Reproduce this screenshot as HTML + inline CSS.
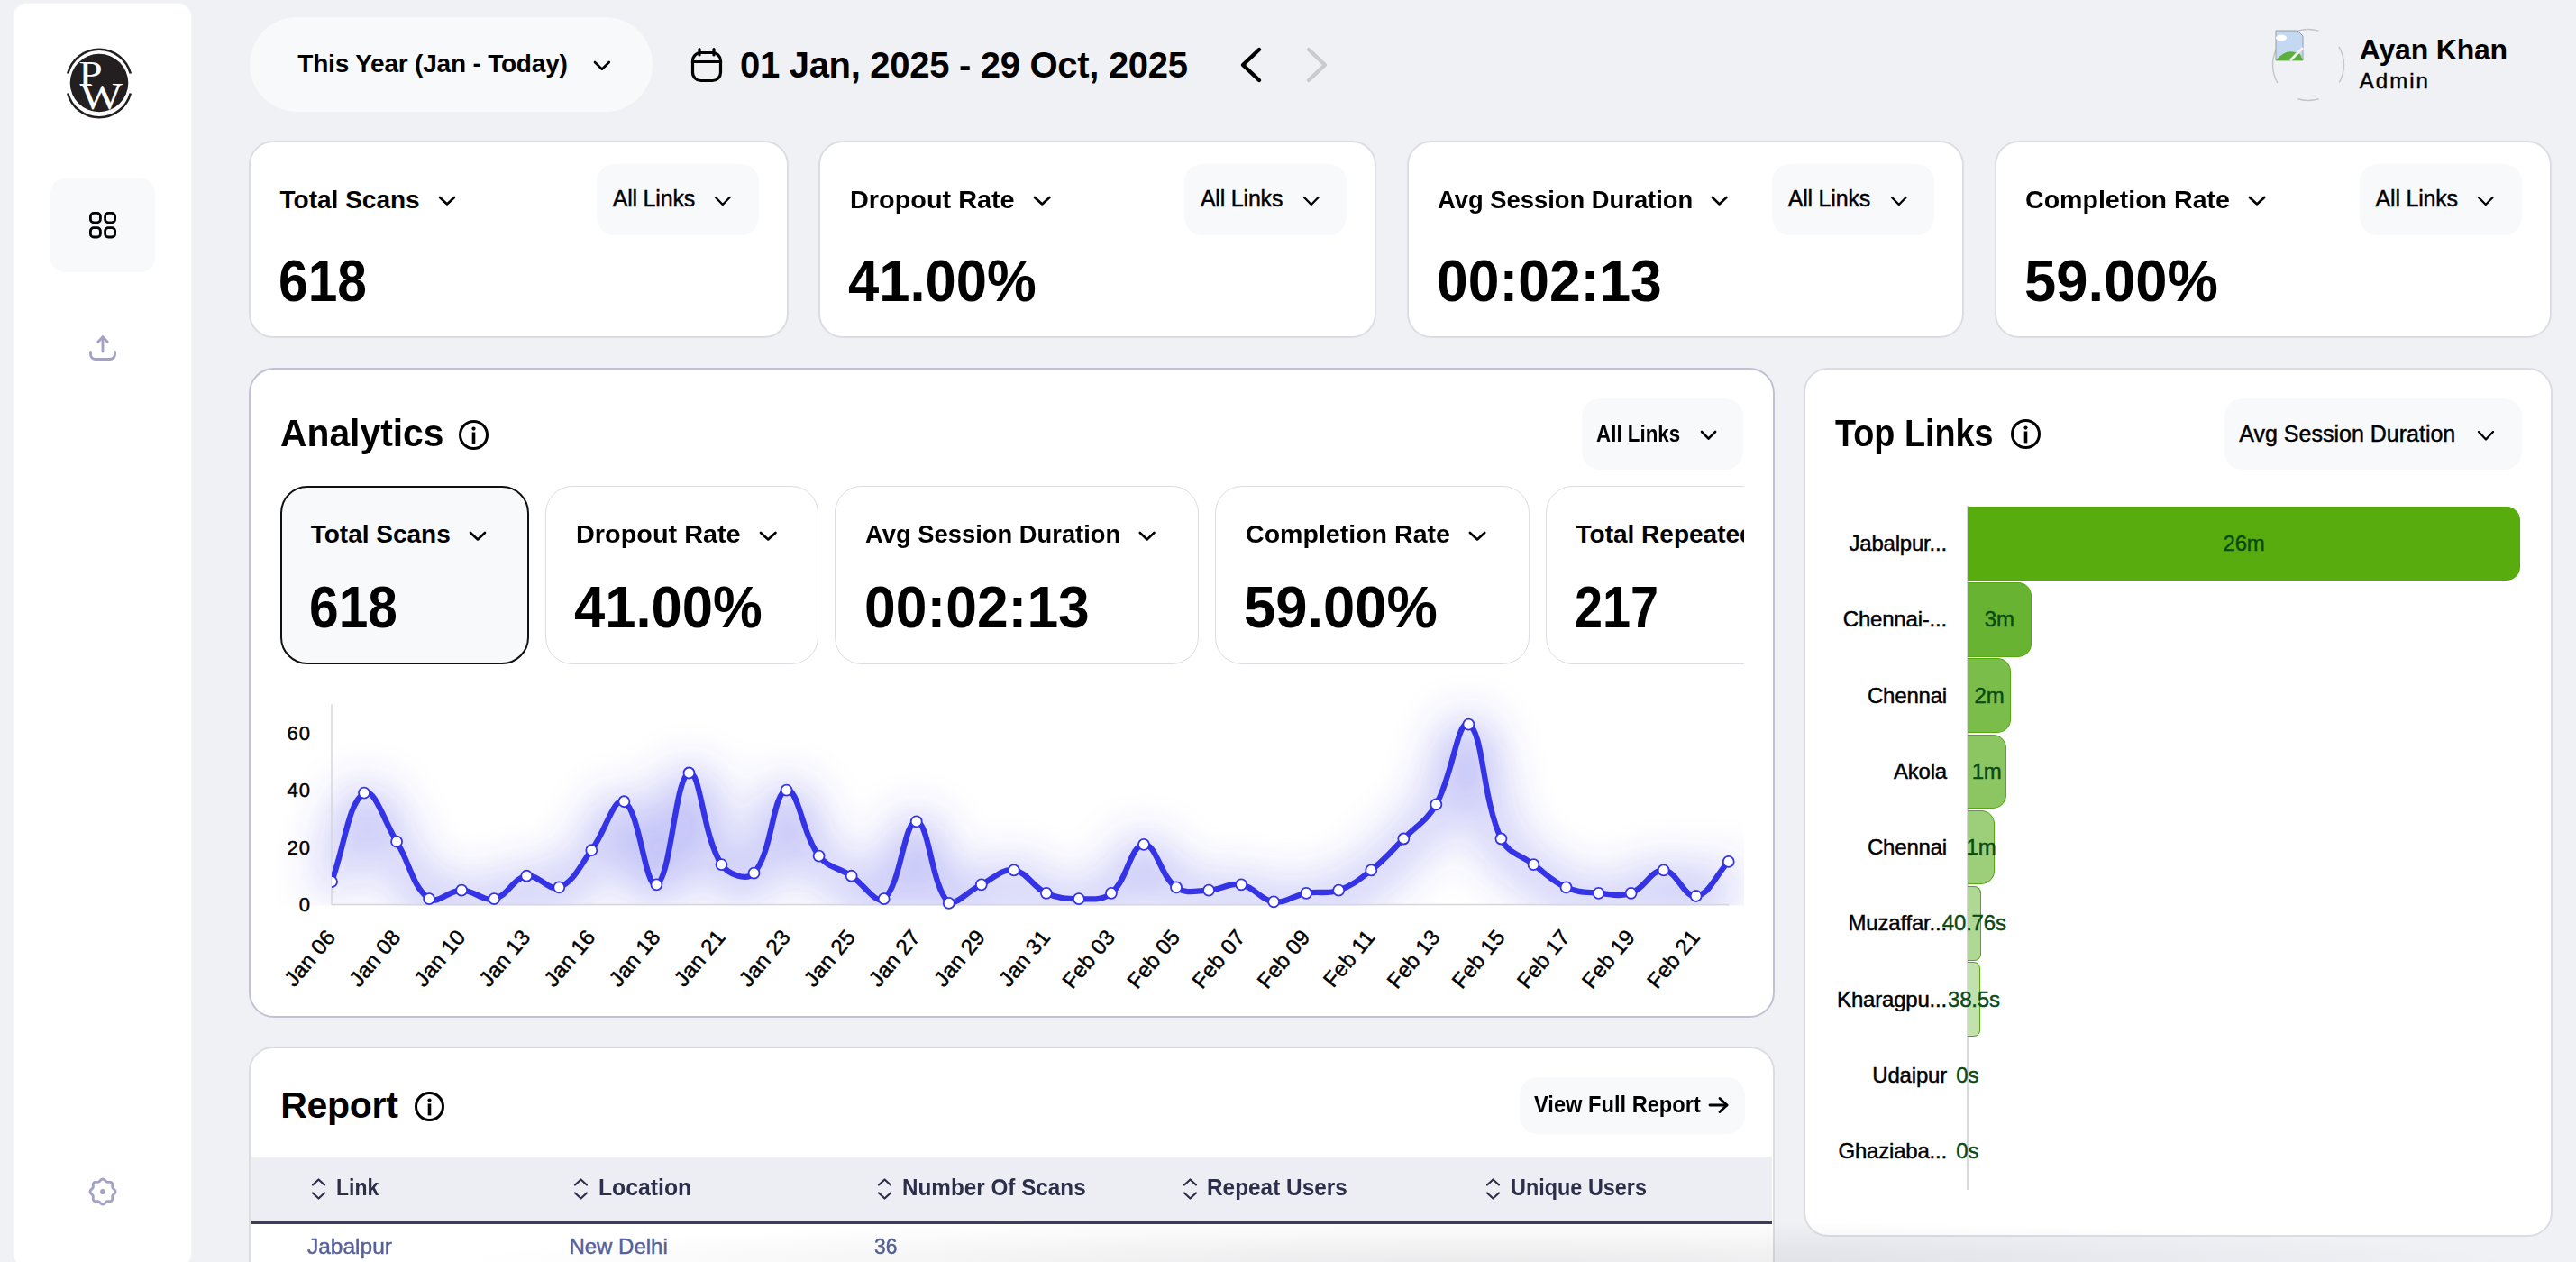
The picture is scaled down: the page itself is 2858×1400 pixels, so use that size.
<!DOCTYPE html>
<html><head><meta charset="utf-8"><style>
html,body{margin:0;padding:0;}
body{width:2858px;height:1400px;overflow:hidden;position:relative;background:#f0f1f5;font-family:"Liberation Sans",sans-serif;}
.t{position:absolute;white-space:nowrap;line-height:1;}
.b{position:absolute;}
</style></head><body>
<div class="b" style="left:15.0px;top:4.0px;width:197.0px;height:1401.0px;background:#fff;border-radius:15px;box-shadow:0 0 3px rgba(255,255,255,0.9);"></div>
<svg class="b" style="left:70px;top:52px" width="80" height="80" viewBox="0 0 80 80">
<circle cx="40" cy="40" r="32.3" fill="#231f20"/>
<path d="M5.2 29.5 A36 36 0 0 1 74.8 29.5" fill="none" stroke="#231f20" stroke-width="2.6"/>
<path d="M5.2 51.5 A36 36 0 0 0 74.8 51.5" fill="none" stroke="#231f20" stroke-width="2.6"/>
<text transform="translate(17.3 42.7) scale(1.19 1)" font-family="Liberation Serif" font-size="40" fill="#fff">P</text>
<text transform="translate(18.5 68.6) scale(1.185 1)" font-family="Liberation Serif" font-size="42.4" fill="#fff">W</text>
</svg>
<div class="b" style="left:56.0px;top:198.0px;width:116.0px;height:104.0px;background:#f8f9fb;border-radius:16px;"></div>
<svg class="b" style="left:97px;top:233px" width="34" height="34" viewBox="0 0 34 34" fill="none" stroke="#000" stroke-width="2.8">
<rect x="3.4" y="3.4" width="11" height="10.4" rx="3.6"/><rect x="19.6" y="3.4" width="11" height="10.4" rx="3.6"/>
<rect x="3.4" y="19.6" width="11" height="10.4" rx="3.6"/><rect x="19.6" y="19.6" width="11" height="10.4" rx="3.6"/></svg>
<svg class="b" style="left:96px;top:369px" width="36" height="34" viewBox="0 0 36 34" fill="none" stroke="#a3a2c6" stroke-width="2.9" stroke-linecap="round" stroke-linejoin="round">
<path d="M18 5 V21"/><path d="M12.8 10.2 L18 4.8 L23.2 10.2"/><path d="M4.5 21.5 V24 A5.5 5.5 0 0 0 10 29.5 H26 A5.5 5.5 0 0 0 31.5 24 V21.5"/></svg>
<svg class="b" style="left:96px;top:1304px" width="36" height="36" viewBox="0 0 36 36"><polygon points="18.00,3.95 18.73,4.07 19.43,4.41 20.07,4.91 20.66,5.50 21.19,6.09 21.70,6.62 22.22,7.01 22.79,7.24 23.43,7.33 24.16,7.33 24.96,7.28 25.79,7.28 26.60,7.38 27.33,7.63 27.93,8.07 28.37,8.67 28.62,9.40 28.72,10.21 28.72,11.04 28.67,11.84 28.67,12.57 28.76,13.21 28.99,13.78 29.38,14.30 29.91,14.81 30.50,15.34 31.09,15.93 31.59,16.57 31.93,17.27 32.05,18.00 31.93,18.73 31.59,19.43 31.09,20.07 30.50,20.66 29.91,21.19 29.38,21.70 28.99,22.22 28.76,22.79 28.67,23.43 28.67,24.16 28.72,24.96 28.72,25.79 28.62,26.60 28.37,27.33 27.93,27.93 27.33,28.37 26.60,28.62 25.79,28.72 24.96,28.72 24.16,28.67 23.43,28.67 22.79,28.76 22.22,28.99 21.70,29.38 21.19,29.91 20.66,30.50 20.07,31.09 19.43,31.59 18.73,31.93 18.00,32.05 17.27,31.93 16.57,31.59 15.93,31.09 15.34,30.50 14.81,29.91 14.30,29.38 13.78,28.99 13.21,28.76 12.57,28.67 11.84,28.67 11.04,28.72 10.21,28.72 9.40,28.62 8.67,28.37 8.07,27.93 7.63,27.33 7.38,26.60 7.28,25.79 7.28,24.96 7.33,24.16 7.33,23.43 7.24,22.79 7.01,22.22 6.62,21.70 6.09,21.19 5.50,20.66 4.91,20.07 4.41,19.43 4.07,18.73 3.95,18.00 4.07,17.27 4.41,16.57 4.91,15.93 5.50,15.34 6.09,14.81 6.62,14.30 7.01,13.78 7.24,13.21 7.33,12.57 7.33,11.84 7.28,11.04 7.28,10.21 7.38,9.40 7.63,8.67 8.07,8.07 8.67,7.63 9.40,7.38 10.21,7.28 11.04,7.28 11.84,7.33 12.57,7.33 13.21,7.24 13.78,7.01 14.30,6.62 14.81,6.09 15.34,5.50 15.93,4.91 16.57,4.41 17.27,4.07 18.00,3.95" fill="none" stroke="#a3a2c6" stroke-width="2.8"/><circle cx="18" cy="18" r="2.9" fill="#a3a2c6"/></svg>
<div class="b" style="left:276.5px;top:19.4px;width:447.5px;height:104.8px;background:#f8f9fb;border-radius:53px;"></div>
<div class="t" style="left:330.3px;top:56.8px;font-size:28px;font-weight:700;color:#000;letter-spacing:-0.2px;">This Year (Jan - Today)</div>
<svg class="b" style="left:657.2px;top:66.2px" width="21.8" height="13.7"><path d="M3 3 L10.9 10.7 L18.8 3" fill="none" stroke="#000" stroke-width="2.6" stroke-linecap="round" stroke-linejoin="round"/></svg>
<svg class="b" style="left:764px;top:51px" width="40" height="42" viewBox="0 0 40 42" fill="none" stroke="#000" stroke-width="3.2" stroke-linecap="round">
<rect x="4.5" y="7.5" width="31" height="31" rx="9"/><path d="M4.5 17.5 H35.5"/><path d="M12 3.5 V10"/><path d="M28 3.5 V10"/></svg>
<div class="t" style="left:821.0px;top:51.5px;font-size:40px;font-weight:700;color:#000;letter-spacing:-0.3px;">01 Jan, 2025 - 29 Oct, 2025</div>
<svg class="b" style="left:1372px;top:50px" width="32" height="44" viewBox="0 0 32 44" fill="none" stroke="#000" stroke-width="4.4" stroke-linecap="round" stroke-linejoin="round"><path d="M25 5 L7 22 L25 39"/></svg>
<svg class="b" style="left:1445px;top:50px" width="32" height="44" viewBox="0 0 32 44" fill="none" stroke="#cbcbcd" stroke-width="4.4" stroke-linecap="round" stroke-linejoin="round"><path d="M7 5 L25 22 L7 39"/></svg>
<svg class="b" style="left:2519px;top:30px" width="84" height="84" viewBox="0 0 84 84">
<circle cx="42" cy="42" r="39.5" fill="none" stroke="#c4c4c8" stroke-width="1.4" stroke-dasharray="41 29.3 24 29.3 41 29.3 24 29.3" stroke-dashoffset="20.5"/>
<path d="M6 4 H30 L36 10 V37 H6 Z" fill="#c5d8f2" stroke="#8a8a8a" stroke-width="0.8"/>
<path d="M6 37 Q18 22 33 30 L36 37 Z" fill="#5cae3d"/>
<ellipse cx="12" cy="12" rx="6" ry="3.5" fill="#fff"/>
<path d="M22 37 L36 23" stroke="#f0f1f5" stroke-width="3"/>
</svg>
<div class="t" style="left:2617.8px;top:39.0px;font-size:32px;font-weight:700;color:#000;letter-spacing:-0.2px;">Ayan Khan</div>
<div class="t" style="left:2617.8px;top:78.4px;font-size:24px;font-weight:400;color:#000;letter-spacing:2.0px;-webkit-text-stroke:0.45px currentColor;">Admin</div>
<div class="b" style="left:276.0px;top:155.9px;width:599.0px;height:219.6px;background:#fff;border:2px solid #dcdde3;border-radius:27px;box-sizing:border-box;"></div>
<div class="t" style="left:310.6px;top:207.5px;font-size:28px;font-weight:700;display:flex;align-items:center;transform:scaleX(1);transform-origin:0 0">Total Scans<svg width="22" height="14" style="margin-left:19px;margin-top:2px" viewBox="0 0 22 14"><path d="M3 3 L11 10.5 L19 3" fill="none" stroke="#000" stroke-width="2.6" stroke-linecap="round" stroke-linejoin="round"/></svg></div>
<div class="b" style="left:661.9px;top:182.0px;width:180.0px;height:79.3px;background:#f8f9fb;border-radius:20px;"></div>
<div class="t" style="left:679.7px;top:208.1px;font-size:25px;font-weight:400;color:#000;letter-spacing:-0.2px;-webkit-text-stroke:0.45px currentColor;">All Links</div>
<svg class="b" style="left:791.4px;top:216.0px" width="21.6" height="14.0"><path d="M3 3 L10.8 11.0 L18.6 3" fill="none" stroke="#000" stroke-width="2.3" stroke-linecap="round" stroke-linejoin="round"/></svg>
<div class="t" style="left:309.1px;top:279.5px;font-size:64px;font-weight:700;color:#000;letter-spacing:0px;transform:scaleX(0.9170);transform-origin:0 0;">618</div>
<div class="b" style="left:908.0px;top:155.9px;width:619.2px;height:219.6px;background:#fff;border:2px solid #dcdde3;border-radius:27px;box-sizing:border-box;"></div>
<div class="t" style="left:942.6px;top:207.5px;font-size:28px;font-weight:700;display:flex;align-items:center;transform:scaleX(1.03);transform-origin:0 0">Dropout Rate<svg width="22" height="14" style="margin-left:19px;margin-top:2px" viewBox="0 0 22 14"><path d="M3 3 L11 10.5 L19 3" fill="none" stroke="#000" stroke-width="2.6" stroke-linecap="round" stroke-linejoin="round"/></svg></div>
<div class="b" style="left:1314.1px;top:182.0px;width:180.0px;height:79.3px;background:#f8f9fb;border-radius:20px;"></div>
<div class="t" style="left:1331.9px;top:208.1px;font-size:25px;font-weight:400;color:#000;letter-spacing:-0.2px;-webkit-text-stroke:0.45px currentColor;">All Links</div>
<svg class="b" style="left:1443.7px;top:216.0px" width="21.6" height="14.0"><path d="M3 3 L10.8 11.0 L18.6 3" fill="none" stroke="#000" stroke-width="2.3" stroke-linecap="round" stroke-linejoin="round"/></svg>
<div class="t" style="left:941.1px;top:279.5px;font-size:64px;font-weight:700;color:#000;letter-spacing:0px;transform:scaleX(0.9620);transform-origin:0 0;">41.00%</div>
<div class="b" style="left:1560.5px;top:155.9px;width:618.5px;height:219.6px;background:#fff;border:2px solid #dcdde3;border-radius:27px;box-sizing:border-box;"></div>
<div class="t" style="left:1595.1px;top:207.5px;font-size:28px;font-weight:700;display:flex;align-items:center;transform:scaleX(0.977);transform-origin:0 0">Avg Session Duration<svg width="22" height="14" style="margin-left:19px;margin-top:2px" viewBox="0 0 22 14"><path d="M3 3 L11 10.5 L19 3" fill="none" stroke="#000" stroke-width="2.6" stroke-linecap="round" stroke-linejoin="round"/></svg></div>
<div class="b" style="left:1965.9px;top:182.0px;width:180.0px;height:79.3px;background:#f8f9fb;border-radius:20px;"></div>
<div class="t" style="left:1983.7px;top:208.1px;font-size:25px;font-weight:400;color:#000;letter-spacing:-0.2px;-webkit-text-stroke:0.45px currentColor;">All Links</div>
<svg class="b" style="left:2095.5px;top:216.0px" width="21.6" height="14.0"><path d="M3 3 L10.8 11.0 L18.6 3" fill="none" stroke="#000" stroke-width="2.3" stroke-linecap="round" stroke-linejoin="round"/></svg>
<div class="t" style="left:1593.6px;top:279.5px;font-size:64px;font-weight:700;color:#000;letter-spacing:0px;transform:scaleX(0.9750);transform-origin:0 0;">00:02:13</div>
<div class="b" style="left:2212.8px;top:155.9px;width:618.1px;height:219.6px;background:#fff;border:2px solid #dcdde3;border-radius:27px;box-sizing:border-box;"></div>
<div class="t" style="left:2247.4px;top:207.5px;font-size:28px;font-weight:700;display:flex;align-items:center;transform:scaleX(1.02);transform-origin:0 0">Completion Rate<svg width="22" height="14" style="margin-left:19px;margin-top:2px" viewBox="0 0 22 14"><path d="M3 3 L11 10.5 L19 3" fill="none" stroke="#000" stroke-width="2.6" stroke-linecap="round" stroke-linejoin="round"/></svg></div>
<div class="b" style="left:2617.8px;top:182.0px;width:180.0px;height:79.3px;background:#f8f9fb;border-radius:20px;"></div>
<div class="t" style="left:2635.6px;top:208.1px;font-size:25px;font-weight:400;color:#000;letter-spacing:-0.2px;-webkit-text-stroke:0.45px currentColor;">All Links</div>
<svg class="b" style="left:2747.4px;top:216.0px" width="21.6" height="14.0"><path d="M3 3 L10.8 11.0 L18.6 3" fill="none" stroke="#000" stroke-width="2.3" stroke-linecap="round" stroke-linejoin="round"/></svg>
<div class="t" style="left:2245.9px;top:279.5px;font-size:64px;font-weight:700;color:#000;letter-spacing:0px;transform:scaleX(0.9900);transform-origin:0 0;">59.00%</div>
<div class="b" style="left:275.9px;top:407.8px;width:1692.9px;height:721.0px;background:#fff;border:2px solid #c0c1d4;border-radius:28px;box-sizing:border-box;"></div>
<div class="t" style="left:310.7px;top:459.8px;font-size:42px;font-weight:700;color:#000;letter-spacing:0px;transform:scaleX(0.9720);transform-origin:0 0;">Analytics</div>
<svg class="b" style="left:507.2px;top:463.5px" width="37" height="37" viewBox="0 0 37 37"><circle cx="18.5" cy="18.5" r="15.0" fill="none" stroke="#000" stroke-width="3"/><circle cx="18.5" cy="11.6" r="2.1" fill="#000"/><rect x="16.7" y="15.5" width="3.6" height="12.9" fill="#000"/></svg>
<div class="b" style="left:1754.6px;top:442.4px;width:179.4px;height:78.9px;background:#f8f9fb;border-radius:20px;"></div>
<div class="t" style="left:1771.4px;top:468.5px;font-size:25px;font-weight:700;color:#000;letter-spacing:0px;transform:scaleX(0.8950);transform-origin:0 0;">All Links</div>
<svg class="b" style="left:1884.7px;top:476.3px" width="21.1" height="13.7"><path d="M3 3 L10.5 10.7 L18.1 3" fill="none" stroke="#000" stroke-width="2.6" stroke-linecap="round" stroke-linejoin="round"/></svg>
<div class="b" style="left:300px;top:530px;width:1635px;height:215px;overflow:hidden;">
<div class="b" style="left:10.7px;top:8.7px;width:276.7px;height:198.3px;background:#f8f9fb;border:2px solid #111;border-radius:30px;box-sizing:border-box;"></div>
<div class="t" style="left:44.7px;top:49.0px;font-size:28px;font-weight:700;display:flex;align-items:center;transform:scaleX(1);transform-origin:0 0">Total Scans<svg width="22" height="14" style="margin-left:19px;margin-top:4px" viewBox="0 0 22 14"><path d="M3 3 L11 10.5 L19 3" fill="none" stroke="#000" stroke-width="2.6" stroke-linecap="round" stroke-linejoin="round"/></svg></div>
<div class="t" style="left:43.2px;top:111.8px;font-size:64px;font-weight:700;transform:scaleX(0.917);transform-origin:0 0">618</div>
<div class="b" style="left:304.9px;top:8.7px;width:303.1px;height:198.3px;background:#fff;border:1.5px solid #dcdde5;border-radius:30px;box-sizing:border-box;"></div>
<div class="t" style="left:338.9px;top:49.0px;font-size:28px;font-weight:700;display:flex;align-items:center;transform:scaleX(1.03);transform-origin:0 0">Dropout Rate<svg width="22" height="14" style="margin-left:19px;margin-top:4px" viewBox="0 0 22 14"><path d="M3 3 L11 10.5 L19 3" fill="none" stroke="#000" stroke-width="2.6" stroke-linecap="round" stroke-linejoin="round"/></svg></div>
<div class="t" style="left:337.4px;top:111.8px;font-size:64px;font-weight:700;transform:scaleX(0.962);transform-origin:0 0">41.00%</div>
<div class="b" style="left:626.4px;top:8.7px;width:403.4px;height:198.3px;background:#fff;border:1.5px solid #dcdde5;border-radius:30px;box-sizing:border-box;"></div>
<div class="t" style="left:660.4px;top:49.0px;font-size:28px;font-weight:700;display:flex;align-items:center;transform:scaleX(0.977);transform-origin:0 0">Avg Session Duration<svg width="22" height="14" style="margin-left:19px;margin-top:4px" viewBox="0 0 22 14"><path d="M3 3 L11 10.5 L19 3" fill="none" stroke="#000" stroke-width="2.6" stroke-linecap="round" stroke-linejoin="round"/></svg></div>
<div class="t" style="left:658.9px;top:111.8px;font-size:64px;font-weight:700;transform:scaleX(0.975);transform-origin:0 0">00:02:13</div>
<div class="b" style="left:1047.7px;top:8.7px;width:349.3px;height:198.3px;background:#fff;border:1.5px solid #dcdde5;border-radius:30px;box-sizing:border-box;"></div>
<div class="t" style="left:1081.7px;top:49.0px;font-size:28px;font-weight:700;display:flex;align-items:center;transform:scaleX(1.02);transform-origin:0 0">Completion Rate<svg width="22" height="14" style="margin-left:19px;margin-top:4px" viewBox="0 0 22 14"><path d="M3 3 L11 10.5 L19 3" fill="none" stroke="#000" stroke-width="2.6" stroke-linecap="round" stroke-linejoin="round"/></svg></div>
<div class="t" style="left:1080.2px;top:111.8px;font-size:64px;font-weight:700;transform:scaleX(0.99);transform-origin:0 0">59.00%</div>
<div class="b" style="left:1414.5px;top:8.7px;width:335.5px;height:198.3px;background:#fff;border:1.5px solid #dcdde5;border-radius:30px;box-sizing:border-box;"></div>
<div class="t" style="left:1448.5px;top:49.0px;font-size:28px;font-weight:700;display:flex;align-items:center;transform:scaleX(1);transform-origin:0 0">Total Repeated Users</div>
<div class="t" style="left:1447.0px;top:111.8px;font-size:64px;font-weight:700;transform:scaleX(0.872);transform-origin:0 0">217</div>
</div>
<svg class="b" style="left:0;top:0" width="2858" height="1400" viewBox="0 0 2858 1400"><defs><filter id="glow" filterUnits="userSpaceOnUse" x="200" y="600" width="1900" height="550"><feGaussianBlur stdDeviation="28"/><feOffset dy="9"/></filter><clipPath id="pc"><rect x="300" y="650" width="1635" height="354.5"/></clipPath></defs><g clip-path="url(#pc)"><path d="M368.00,978.11 C382.42,938.75 386.23,890.69 404.04,879.71 C415.07,872.92 426.51,911.57 440.08,933.67 C455.34,958.54 457.03,982.86 476.12,997.15 C485.87,1003.50 497.74,987.63 512.16,987.63 C526.58,987.63 534.99,1000.06 548.20,997.15 C563.82,993.71 568.79,974.48 584.24,971.76 C597.63,969.40 608.43,989.15 620.28,984.46 C637.27,977.72 643.12,960.63 656.32,943.19 C671.95,922.54 680.93,883.20 692.36,889.24 C709.77,898.43 715.89,986.79 728.40,981.28 C744.72,974.10 748.74,862.34 764.44,857.50 C777.57,853.45 779.06,926.05 800.48,959.06 C807.89,970.48 828.62,977.63 836.52,968.59 C857.46,944.62 856.75,880.72 872.56,876.54 C885.58,873.10 889.63,924.48 908.60,949.54 C918.46,962.57 930.52,962.43 944.64,971.76 C959.35,981.47 971.41,1003.50 980.68,997.15 C1000.24,980.79 1002.64,910.52 1016.72,911.45 C1031.47,912.43 1032.55,982.33 1052.76,1001.91 C1061.38,1003.50 1074.00,988.78 1088.80,981.28 C1102.83,974.18 1111.24,963.62 1124.84,965.41 C1140.07,967.42 1145.13,983.87 1160.88,990.80 C1173.96,996.56 1182.50,997.15 1196.92,997.15 C1211.34,997.15 1222.56,999.50 1232.96,990.80 C1251.40,975.38 1253.99,938.17 1269.00,936.85 C1282.82,935.63 1287.09,971.81 1305.04,984.46 C1315.92,992.12 1326.75,988.26 1341.08,987.63 C1355.58,986.99 1363.48,978.88 1377.12,981.28 C1392.31,983.96 1398.10,998.34 1413.16,1000.33 C1426.93,1002.15 1434.57,993.38 1449.20,990.80 C1463.40,988.30 1471.95,992.31 1485.24,987.63 C1500.79,982.15 1508.09,975.87 1521.28,965.41 C1536.92,953.02 1543.22,944.78 1557.32,930.50 C1572.05,915.58 1583.17,910.36 1593.36,892.41 C1612.00,859.58 1617.27,797.13 1629.40,803.54 C1646.10,812.36 1644.06,884.36 1665.44,930.50 C1672.89,946.57 1686.76,948.04 1701.48,959.06 C1715.59,969.63 1721.77,977.52 1737.52,984.46 C1750.60,990.21 1759.03,989.52 1773.56,990.80 C1787.87,992.06 1796.63,995.37 1809.60,990.80 C1825.46,985.22 1831.53,964.79 1845.64,965.41 C1860.36,966.06 1868.21,995.76 1881.68,993.98 C1897.04,991.95 1903.30,971.13 1917.72,955.89" fill="none" stroke="#3434e6" stroke-width="20" opacity="0.55" filter="url(#glow)"/></g><line x1="368" y1="781.3" x2="368" y2="1003.5" stroke="#d6d6dc" stroke-width="1.5"/><line x1="368" y1="1003.5" x2="1918" y2="1003.5" stroke="#d6d6dc" stroke-width="1.5"/><text x="345" y="1011.0" text-anchor="end" font-family="Liberation Sans" font-size="22" letter-spacing="1" stroke="#000" stroke-width="0.45">0</text><text x="345" y="947.5" text-anchor="end" font-family="Liberation Sans" font-size="22" letter-spacing="1" stroke="#000" stroke-width="0.45">20</text><text x="345" y="884.0" text-anchor="end" font-family="Liberation Sans" font-size="22" letter-spacing="1" stroke="#000" stroke-width="0.45">40</text><text x="345" y="820.6" text-anchor="end" font-family="Liberation Sans" font-size="22" letter-spacing="1" stroke="#000" stroke-width="0.45">60</text><clipPath id="pa"><rect x="368" y="700" width="1570" height="320"/></clipPath><g clip-path="url(#pa)"><path d="M368.00,978.11 C382.42,938.75 386.23,890.69 404.04,879.71 C415.07,872.92 426.51,911.57 440.08,933.67 C455.34,958.54 457.03,982.86 476.12,997.15 C485.87,1003.50 497.74,987.63 512.16,987.63 C526.58,987.63 534.99,1000.06 548.20,997.15 C563.82,993.71 568.79,974.48 584.24,971.76 C597.63,969.40 608.43,989.15 620.28,984.46 C637.27,977.72 643.12,960.63 656.32,943.19 C671.95,922.54 680.93,883.20 692.36,889.24 C709.77,898.43 715.89,986.79 728.40,981.28 C744.72,974.10 748.74,862.34 764.44,857.50 C777.57,853.45 779.06,926.05 800.48,959.06 C807.89,970.48 828.62,977.63 836.52,968.59 C857.46,944.62 856.75,880.72 872.56,876.54 C885.58,873.10 889.63,924.48 908.60,949.54 C918.46,962.57 930.52,962.43 944.64,971.76 C959.35,981.47 971.41,1003.50 980.68,997.15 C1000.24,980.79 1002.64,910.52 1016.72,911.45 C1031.47,912.43 1032.55,982.33 1052.76,1001.91 C1061.38,1003.50 1074.00,988.78 1088.80,981.28 C1102.83,974.18 1111.24,963.62 1124.84,965.41 C1140.07,967.42 1145.13,983.87 1160.88,990.80 C1173.96,996.56 1182.50,997.15 1196.92,997.15 C1211.34,997.15 1222.56,999.50 1232.96,990.80 C1251.40,975.38 1253.99,938.17 1269.00,936.85 C1282.82,935.63 1287.09,971.81 1305.04,984.46 C1315.92,992.12 1326.75,988.26 1341.08,987.63 C1355.58,986.99 1363.48,978.88 1377.12,981.28 C1392.31,983.96 1398.10,998.34 1413.16,1000.33 C1426.93,1002.15 1434.57,993.38 1449.20,990.80 C1463.40,988.30 1471.95,992.31 1485.24,987.63 C1500.79,982.15 1508.09,975.87 1521.28,965.41 C1536.92,953.02 1543.22,944.78 1557.32,930.50 C1572.05,915.58 1583.17,910.36 1593.36,892.41 C1612.00,859.58 1617.27,797.13 1629.40,803.54 C1646.10,812.36 1644.06,884.36 1665.44,930.50 C1672.89,946.57 1686.76,948.04 1701.48,959.06 C1715.59,969.63 1721.77,977.52 1737.52,984.46 C1750.60,990.21 1759.03,989.52 1773.56,990.80 C1787.87,992.06 1796.63,995.37 1809.60,990.80 C1825.46,985.22 1831.53,964.79 1845.64,965.41 C1860.36,966.06 1868.21,995.76 1881.68,993.98 C1897.04,991.95 1903.30,971.13 1917.72,955.89" fill="none" stroke="#3434e6" stroke-width="6.3" stroke-linejoin="round"/><circle cx="368.00" cy="978.11" r="6" fill="#fff" stroke="#3434e6" stroke-width="1.8"/><circle cx="404.04" cy="879.71" r="6" fill="#fff" stroke="#3434e6" stroke-width="1.8"/><circle cx="440.08" cy="933.67" r="6" fill="#fff" stroke="#3434e6" stroke-width="1.8"/><circle cx="476.12" cy="997.15" r="6" fill="#fff" stroke="#3434e6" stroke-width="1.8"/><circle cx="512.16" cy="987.63" r="6" fill="#fff" stroke="#3434e6" stroke-width="1.8"/><circle cx="548.20" cy="997.15" r="6" fill="#fff" stroke="#3434e6" stroke-width="1.8"/><circle cx="584.24" cy="971.76" r="6" fill="#fff" stroke="#3434e6" stroke-width="1.8"/><circle cx="620.28" cy="984.46" r="6" fill="#fff" stroke="#3434e6" stroke-width="1.8"/><circle cx="656.32" cy="943.19" r="6" fill="#fff" stroke="#3434e6" stroke-width="1.8"/><circle cx="692.36" cy="889.24" r="6" fill="#fff" stroke="#3434e6" stroke-width="1.8"/><circle cx="728.40" cy="981.28" r="6" fill="#fff" stroke="#3434e6" stroke-width="1.8"/><circle cx="764.44" cy="857.50" r="6" fill="#fff" stroke="#3434e6" stroke-width="1.8"/><circle cx="800.48" cy="959.06" r="6" fill="#fff" stroke="#3434e6" stroke-width="1.8"/><circle cx="836.52" cy="968.59" r="6" fill="#fff" stroke="#3434e6" stroke-width="1.8"/><circle cx="872.56" cy="876.54" r="6" fill="#fff" stroke="#3434e6" stroke-width="1.8"/><circle cx="908.60" cy="949.54" r="6" fill="#fff" stroke="#3434e6" stroke-width="1.8"/><circle cx="944.64" cy="971.76" r="6" fill="#fff" stroke="#3434e6" stroke-width="1.8"/><circle cx="980.68" cy="997.15" r="6" fill="#fff" stroke="#3434e6" stroke-width="1.8"/><circle cx="1016.72" cy="911.45" r="6" fill="#fff" stroke="#3434e6" stroke-width="1.8"/><circle cx="1052.76" cy="1001.91" r="6" fill="#fff" stroke="#3434e6" stroke-width="1.8"/><circle cx="1088.80" cy="981.28" r="6" fill="#fff" stroke="#3434e6" stroke-width="1.8"/><circle cx="1124.84" cy="965.41" r="6" fill="#fff" stroke="#3434e6" stroke-width="1.8"/><circle cx="1160.88" cy="990.80" r="6" fill="#fff" stroke="#3434e6" stroke-width="1.8"/><circle cx="1196.92" cy="997.15" r="6" fill="#fff" stroke="#3434e6" stroke-width="1.8"/><circle cx="1232.96" cy="990.80" r="6" fill="#fff" stroke="#3434e6" stroke-width="1.8"/><circle cx="1269.00" cy="936.85" r="6" fill="#fff" stroke="#3434e6" stroke-width="1.8"/><circle cx="1305.04" cy="984.46" r="6" fill="#fff" stroke="#3434e6" stroke-width="1.8"/><circle cx="1341.08" cy="987.63" r="6" fill="#fff" stroke="#3434e6" stroke-width="1.8"/><circle cx="1377.12" cy="981.28" r="6" fill="#fff" stroke="#3434e6" stroke-width="1.8"/><circle cx="1413.16" cy="1000.33" r="6" fill="#fff" stroke="#3434e6" stroke-width="1.8"/><circle cx="1449.20" cy="990.80" r="6" fill="#fff" stroke="#3434e6" stroke-width="1.8"/><circle cx="1485.24" cy="987.63" r="6" fill="#fff" stroke="#3434e6" stroke-width="1.8"/><circle cx="1521.28" cy="965.41" r="6" fill="#fff" stroke="#3434e6" stroke-width="1.8"/><circle cx="1557.32" cy="930.50" r="6" fill="#fff" stroke="#3434e6" stroke-width="1.8"/><circle cx="1593.36" cy="892.41" r="6" fill="#fff" stroke="#3434e6" stroke-width="1.8"/><circle cx="1629.40" cy="803.54" r="6" fill="#fff" stroke="#3434e6" stroke-width="1.8"/><circle cx="1665.44" cy="930.50" r="6" fill="#fff" stroke="#3434e6" stroke-width="1.8"/><circle cx="1701.48" cy="959.06" r="6" fill="#fff" stroke="#3434e6" stroke-width="1.8"/><circle cx="1737.52" cy="984.46" r="6" fill="#fff" stroke="#3434e6" stroke-width="1.8"/><circle cx="1773.56" cy="990.80" r="6" fill="#fff" stroke="#3434e6" stroke-width="1.8"/><circle cx="1809.60" cy="990.80" r="6" fill="#fff" stroke="#3434e6" stroke-width="1.8"/><circle cx="1845.64" cy="965.41" r="6" fill="#fff" stroke="#3434e6" stroke-width="1.8"/><circle cx="1881.68" cy="993.98" r="6" fill="#fff" stroke="#3434e6" stroke-width="1.8"/><circle cx="1917.72" cy="955.89" r="6" fill="#fff" stroke="#3434e6" stroke-width="1.8"/></g><text x="373.5" y="1040" transform="rotate(-50 373.5 1040)" text-anchor="end" font-family="Liberation Sans" font-size="24" letter-spacing="0.2" stroke="#000" stroke-width="0.45">Jan 06</text><text x="445.6" y="1040" transform="rotate(-50 445.6 1040)" text-anchor="end" font-family="Liberation Sans" font-size="24" letter-spacing="0.2" stroke="#000" stroke-width="0.45">Jan 08</text><text x="517.7" y="1040" transform="rotate(-50 517.7 1040)" text-anchor="end" font-family="Liberation Sans" font-size="24" letter-spacing="0.2" stroke="#000" stroke-width="0.45">Jan 10</text><text x="589.7" y="1040" transform="rotate(-50 589.7 1040)" text-anchor="end" font-family="Liberation Sans" font-size="24" letter-spacing="0.2" stroke="#000" stroke-width="0.45">Jan 13</text><text x="661.8" y="1040" transform="rotate(-50 661.8 1040)" text-anchor="end" font-family="Liberation Sans" font-size="24" letter-spacing="0.2" stroke="#000" stroke-width="0.45">Jan 16</text><text x="733.9" y="1040" transform="rotate(-50 733.9 1040)" text-anchor="end" font-family="Liberation Sans" font-size="24" letter-spacing="0.2" stroke="#000" stroke-width="0.45">Jan 18</text><text x="806.0" y="1040" transform="rotate(-50 806.0 1040)" text-anchor="end" font-family="Liberation Sans" font-size="24" letter-spacing="0.2" stroke="#000" stroke-width="0.45">Jan 21</text><text x="878.1" y="1040" transform="rotate(-50 878.1 1040)" text-anchor="end" font-family="Liberation Sans" font-size="24" letter-spacing="0.2" stroke="#000" stroke-width="0.45">Jan 23</text><text x="950.1" y="1040" transform="rotate(-50 950.1 1040)" text-anchor="end" font-family="Liberation Sans" font-size="24" letter-spacing="0.2" stroke="#000" stroke-width="0.45">Jan 25</text><text x="1022.2" y="1040" transform="rotate(-50 1022.2 1040)" text-anchor="end" font-family="Liberation Sans" font-size="24" letter-spacing="0.2" stroke="#000" stroke-width="0.45">Jan 27</text><text x="1094.3" y="1040" transform="rotate(-50 1094.3 1040)" text-anchor="end" font-family="Liberation Sans" font-size="24" letter-spacing="0.2" stroke="#000" stroke-width="0.45">Jan 29</text><text x="1166.4" y="1040" transform="rotate(-50 1166.4 1040)" text-anchor="end" font-family="Liberation Sans" font-size="24" letter-spacing="0.2" stroke="#000" stroke-width="0.45">Jan 31</text><text x="1238.5" y="1040" transform="rotate(-50 1238.5 1040)" text-anchor="end" font-family="Liberation Sans" font-size="24" letter-spacing="0.2" stroke="#000" stroke-width="0.45">Feb 03</text><text x="1310.5" y="1040" transform="rotate(-50 1310.5 1040)" text-anchor="end" font-family="Liberation Sans" font-size="24" letter-spacing="0.2" stroke="#000" stroke-width="0.45">Feb 05</text><text x="1382.6" y="1040" transform="rotate(-50 1382.6 1040)" text-anchor="end" font-family="Liberation Sans" font-size="24" letter-spacing="0.2" stroke="#000" stroke-width="0.45">Feb 07</text><text x="1454.7" y="1040" transform="rotate(-50 1454.7 1040)" text-anchor="end" font-family="Liberation Sans" font-size="24" letter-spacing="0.2" stroke="#000" stroke-width="0.45">Feb 09</text><text x="1526.8" y="1040" transform="rotate(-50 1526.8 1040)" text-anchor="end" font-family="Liberation Sans" font-size="24" letter-spacing="0.2" stroke="#000" stroke-width="0.45">Feb 11</text><text x="1598.9" y="1040" transform="rotate(-50 1598.9 1040)" text-anchor="end" font-family="Liberation Sans" font-size="24" letter-spacing="0.2" stroke="#000" stroke-width="0.45">Feb 13</text><text x="1670.9" y="1040" transform="rotate(-50 1670.9 1040)" text-anchor="end" font-family="Liberation Sans" font-size="24" letter-spacing="0.2" stroke="#000" stroke-width="0.45">Feb 15</text><text x="1743.0" y="1040" transform="rotate(-50 1743.0 1040)" text-anchor="end" font-family="Liberation Sans" font-size="24" letter-spacing="0.2" stroke="#000" stroke-width="0.45">Feb 17</text><text x="1815.1" y="1040" transform="rotate(-50 1815.1 1040)" text-anchor="end" font-family="Liberation Sans" font-size="24" letter-spacing="0.2" stroke="#000" stroke-width="0.45">Feb 19</text><text x="1887.2" y="1040" transform="rotate(-50 1887.2 1040)" text-anchor="end" font-family="Liberation Sans" font-size="24" letter-spacing="0.2" stroke="#000" stroke-width="0.45">Feb 21</text></svg>
<div class="b" style="left:2001.1px;top:407.8px;width:830.7px;height:964.0px;background:#fff;border:2px solid #dcdde3;border-radius:27px;box-sizing:border-box;"></div>
<div class="t" style="left:2036.2px;top:460.4px;font-size:42px;font-weight:700;color:#000;letter-spacing:0px;transform:scaleX(0.8990);transform-origin:0 0;">Top Links</div>
<svg class="b" style="left:2228.5px;top:463.0px" width="37" height="37" viewBox="0 0 37 37"><circle cx="18.5" cy="18.5" r="15.0" fill="none" stroke="#000" stroke-width="3"/><circle cx="18.5" cy="11.6" r="2.1" fill="#000"/><rect x="16.7" y="15.5" width="3.6" height="12.9" fill="#000"/></svg>
<div class="b" style="left:2468.4px;top:442.0px;width:329.2px;height:79.3px;background:#f8f9fb;border-radius:20px;"></div>
<div class="t" style="left:2484.3px;top:469.1px;font-size:25px;font-weight:400;color:#000;letter-spacing:0px;-webkit-text-stroke:0.45px currentColor;">Avg Session Duration</div>
<svg class="b" style="left:2747.2px;top:475.6px" width="22.0" height="14.5"><path d="M3 3 L11.0 11.5 L19.0 3" fill="none" stroke="#000" stroke-width="2.3" stroke-linecap="round" stroke-linejoin="round"/></svg>
<div class="b" style="left:2182.0px;top:561.0px;width:1.5px;height:759.0px;background:#d9d9d9;"></div>
<div class="b" style="left:2182.8px;top:561.7px;width:613.5px;height:82.6px;background:#58ac0e;border:1.8px solid #52aa0c;border-left:none;border-radius:0 15.0px 15.0px 0;box-sizing:border-box;"></div>
<div class="t" style="right:698.0px;top:591.0px;font-size:24px;font-weight:400;color:#000;letter-spacing:-0.2px;text-align:right;-webkit-text-stroke:0.45px currentColor;">Jabalpur...</div>
<div class="t" style="left:2289.6px;width:400px;top:591.0px;font-size:24px;font-weight:400;color:#0b4a14;letter-spacing:-0.2px;text-align:center;-webkit-text-stroke:0.45px currentColor;">26m</div>
<div class="b" style="left:2182.8px;top:646.0px;width:71.0px;height:82.6px;background:#68b432;border:1.8px solid #52aa0c;border-left:none;border-radius:0 15.0px 15.0px 0;box-sizing:border-box;"></div>
<div class="t" style="right:698.0px;top:675.2px;font-size:24px;font-weight:400;color:#000;letter-spacing:-0.2px;text-align:right;-webkit-text-stroke:0.45px currentColor;">Chennai-...</div>
<div class="t" style="left:2018.3px;width:400px;top:675.2px;font-size:24px;font-weight:400;color:#0b4a14;letter-spacing:-0.2px;text-align:center;-webkit-text-stroke:0.45px currentColor;">3m</div>
<div class="b" style="left:2182.8px;top:730.2px;width:48.6px;height:82.6px;background:#7abd4b;border:1.8px solid #52aa0c;border-left:none;border-radius:0 15.0px 15.0px 0;box-sizing:border-box;"></div>
<div class="t" style="right:698.0px;top:759.5px;font-size:24px;font-weight:400;color:#000;letter-spacing:-0.2px;text-align:right;-webkit-text-stroke:0.45px currentColor;">Chennai</div>
<div class="t" style="left:2007.1px;width:400px;top:759.5px;font-size:24px;font-weight:400;color:#0b4a14;letter-spacing:-0.2px;text-align:center;-webkit-text-stroke:0.45px currentColor;">2m</div>
<div class="b" style="left:2182.8px;top:814.5px;width:42.9px;height:82.6px;background:#8bc663;border:1.8px solid #52aa0c;border-left:none;border-radius:0 15.0px 15.0px 0;box-sizing:border-box;"></div>
<div class="t" style="right:698.0px;top:843.8px;font-size:24px;font-weight:400;color:#000;letter-spacing:-0.2px;text-align:right;-webkit-text-stroke:0.45px currentColor;">Akola</div>
<div class="t" style="left:2004.2px;width:400px;top:843.8px;font-size:24px;font-weight:400;color:#0b4a14;letter-spacing:-0.2px;text-align:center;-webkit-text-stroke:0.45px currentColor;">1m</div>
<div class="b" style="left:2182.8px;top:898.7px;width:30.5px;height:82.6px;background:#9dcf7b;border:1.8px solid #52aa0c;border-left:none;border-radius:0 15.0px 15.0px 0;box-sizing:border-box;"></div>
<div class="t" style="right:698.0px;top:928.0px;font-size:24px;font-weight:400;color:#000;letter-spacing:-0.2px;text-align:right;-webkit-text-stroke:0.45px currentColor;">Chennai</div>
<div class="t" style="left:1998.1px;width:400px;top:928.0px;font-size:24px;font-weight:400;color:#0b4a14;letter-spacing:-0.2px;text-align:center;-webkit-text-stroke:0.45px currentColor;">1m</div>
<div class="b" style="left:2182.8px;top:983.0px;width:15.0px;height:82.6px;background:#b0d895;border:1.8px solid #52aa0c;border-left:none;border-radius:0 7.5px 7.5px 0;box-sizing:border-box;"></div>
<div class="t" style="right:698.0px;top:1012.3px;font-size:24px;font-weight:400;color:#000;letter-spacing:-0.2px;text-align:right;-webkit-text-stroke:0.45px currentColor;">Muzaffar...</div>
<div class="t" style="left:1990.3px;width:400px;top:1012.3px;font-size:24px;font-weight:400;color:#0b4a14;letter-spacing:-0.2px;text-align:center;-webkit-text-stroke:0.45px currentColor;">40.76s</div>
<div class="b" style="left:2182.8px;top:1067.3px;width:14.2px;height:82.6px;background:#c2e1ad;border:1.8px solid #52aa0c;border-left:none;border-radius:0 7.1px 7.1px 0;box-sizing:border-box;"></div>
<div class="t" style="right:698.0px;top:1096.5px;font-size:24px;font-weight:400;color:#000;letter-spacing:-0.2px;text-align:right;-webkit-text-stroke:0.45px currentColor;">Kharagpu...</div>
<div class="t" style="left:1989.9px;width:400px;top:1096.5px;font-size:24px;font-weight:400;color:#0b4a14;letter-spacing:-0.2px;text-align:center;-webkit-text-stroke:0.45px currentColor;">38.5s</div>
<div class="t" style="right:698.0px;top:1180.8px;font-size:24px;font-weight:400;color:#000;letter-spacing:-0.2px;text-align:right;-webkit-text-stroke:0.45px currentColor;">Udaipur</div>
<div class="t" style="left:1982.8px;width:400px;top:1180.8px;font-size:24px;font-weight:400;color:#0b4a14;letter-spacing:-0.2px;text-align:center;-webkit-text-stroke:0.45px currentColor;">0s</div>
<div class="t" style="right:698.0px;top:1265.1px;font-size:24px;font-weight:400;color:#000;letter-spacing:-0.2px;text-align:right;-webkit-text-stroke:0.45px currentColor;">Ghaziaba...</div>
<div class="t" style="left:1982.8px;width:400px;top:1265.1px;font-size:24px;font-weight:400;color:#0b4a14;letter-spacing:-0.2px;text-align:center;-webkit-text-stroke:0.45px currentColor;">0s</div>
<div class="b" style="left:276.1px;top:1160.7px;width:1692.7px;height:279.3px;background:#fff;border:2px solid #dcdde3;border-radius:27px;box-sizing:border-box;"></div>
<div class="t" style="left:311.2px;top:1205.7px;font-size:41px;font-weight:700;color:#000;letter-spacing:-0.3px;">Report</div>
<svg class="b" style="left:457.5px;top:1208.5px" width="37" height="37" viewBox="0 0 37 37"><circle cx="18.5" cy="18.5" r="15.0" fill="none" stroke="#000" stroke-width="3"/><circle cx="18.5" cy="11.6" r="2.1" fill="#000"/><rect x="16.7" y="15.5" width="3.6" height="12.9" fill="#000"/></svg>
<div class="b" style="left:1686.0px;top:1194.6px;width:249.5px;height:63.9px;background:#f8f9fb;border-radius:20px;"></div>
<div class="t" style="left:1702.3px;top:1213.1px;font-size:25px;font-weight:700;color:#000;letter-spacing:0px;transform:scaleX(0.9460);transform-origin:0 0;">View Full Report</div>
<svg class="b" style="left:1894px;top:1214px" width="26" height="24" viewBox="0 0 26 24" fill="none" stroke="#000" stroke-width="2.8" stroke-linecap="round" stroke-linejoin="round"><path d="M3 12 H22"/><path d="M14 4.5 L22 12 L14 19.5"/></svg>
<div class="b" style="left:278.5px;top:1283.4px;width:1687.3px;height:72.6px;background:#eceef4;"></div>
<div class="b" style="left:278.5px;top:1355.0px;width:1687.3px;height:2.5px;background:#3b3d5c;"></div>
<svg class="b" style="left:344.4px;top:1306px" width="19" height="26" viewBox="0 0 19 26" fill="none" stroke="#2d2f4a" stroke-width="2.2" stroke-linecap="round" stroke-linejoin="round"><path d="M3 8.5 L9.5 2.5 L16 8.5"/><path d="M3 17.5 L9.5 23.5 L16 17.5"/></svg>
<div class="t" style="left:373.3px;top:1305.3px;font-size:25px;font-weight:700;color:#2d2f4a;letter-spacing:0px;transform:scaleX(0.9180);transform-origin:0 0;">Link</div>
<svg class="b" style="left:634.6px;top:1306px" width="19" height="26" viewBox="0 0 19 26" fill="none" stroke="#2d2f4a" stroke-width="2.2" stroke-linecap="round" stroke-linejoin="round"><path d="M3 8.5 L9.5 2.5 L16 8.5"/><path d="M3 17.5 L9.5 23.5 L16 17.5"/></svg>
<div class="t" style="left:663.5px;top:1305.3px;font-size:25px;font-weight:700;color:#2d2f4a;letter-spacing:0px;transform:scaleX(0.9900);transform-origin:0 0;">Location</div>
<svg class="b" style="left:972.0px;top:1306px" width="19" height="26" viewBox="0 0 19 26" fill="none" stroke="#2d2f4a" stroke-width="2.2" stroke-linecap="round" stroke-linejoin="round"><path d="M3 8.5 L9.5 2.5 L16 8.5"/><path d="M3 17.5 L9.5 23.5 L16 17.5"/></svg>
<div class="t" style="left:1000.9px;top:1305.3px;font-size:25px;font-weight:700;color:#2d2f4a;letter-spacing:0px;transform:scaleX(0.9710);transform-origin:0 0;">Number Of Scans</div>
<svg class="b" style="left:1310.5px;top:1306px" width="19" height="26" viewBox="0 0 19 26" fill="none" stroke="#2d2f4a" stroke-width="2.2" stroke-linecap="round" stroke-linejoin="round"><path d="M3 8.5 L9.5 2.5 L16 8.5"/><path d="M3 17.5 L9.5 23.5 L16 17.5"/></svg>
<div class="t" style="left:1339.4px;top:1305.3px;font-size:25px;font-weight:700;color:#2d2f4a;letter-spacing:0px;transform:scaleX(0.9750);transform-origin:0 0;">Repeat Users</div>
<svg class="b" style="left:1647.4px;top:1306px" width="19" height="26" viewBox="0 0 19 26" fill="none" stroke="#2d2f4a" stroke-width="2.2" stroke-linecap="round" stroke-linejoin="round"><path d="M3 8.5 L9.5 2.5 L16 8.5"/><path d="M3 17.5 L9.5 23.5 L16 17.5"/></svg>
<div class="t" style="left:1676.3px;top:1305.3px;font-size:25px;font-weight:700;color:#2d2f4a;letter-spacing:0px;transform:scaleX(0.9370);transform-origin:0 0;">Unique Users</div>
<div class="t" style="left:341.2px;top:1370.7px;font-size:24px;font-weight:400;color:#56609a;letter-spacing:0px;transform:scaleX(1.0200);transform-origin:0 0;-webkit-text-stroke:0.45px currentColor;">Jabalpur</div>
<div class="t" style="left:631.4px;top:1370.7px;font-size:24px;font-weight:400;color:#56609a;letter-spacing:0px;-webkit-text-stroke:0.45px currentColor;">New Delhi</div>
<div class="t" style="left:969.8px;top:1370.7px;font-size:24px;font-weight:400;color:#56609a;letter-spacing:0px;transform:scaleX(0.9500);transform-origin:0 0;-webkit-text-stroke:0.45px currentColor;">36</div>
<div class="b" style="left:0;top:1340px;width:2858px;height:60px;background:radial-gradient(ellipse 1150px 50px at 1650px 62px, rgba(20,20,40,0.09), rgba(20,20,40,0));"></div>

</body></html>
